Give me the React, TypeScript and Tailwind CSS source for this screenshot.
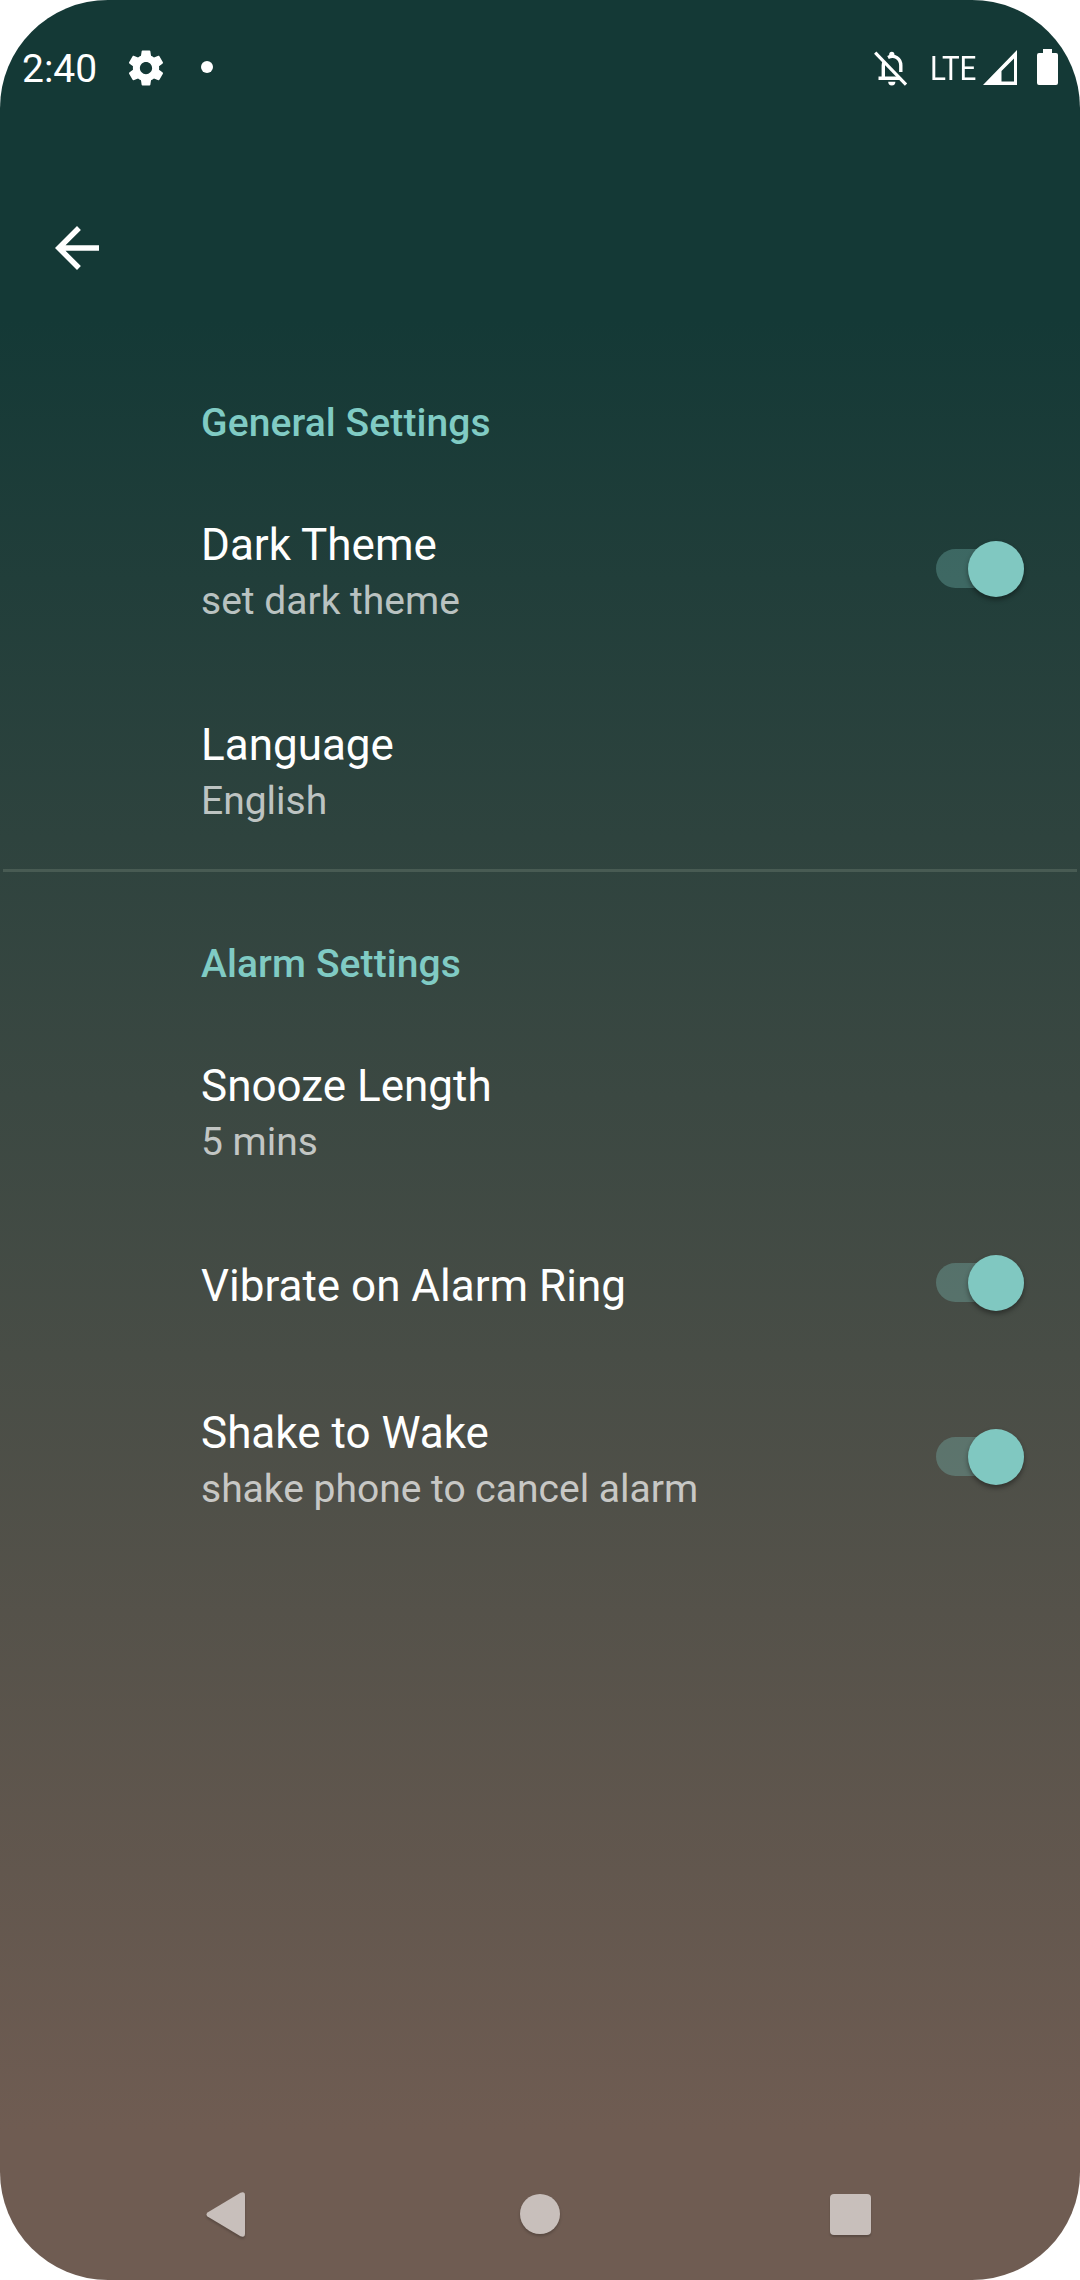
import React from "react";

function Switch() {
  return (
    <div className="relative mr-[56px] h-[56px] w-[88px] shrink-0">
      <div className="absolute left-0 top-[8px] h-[39px] w-[88px] rounded-full bg-[#80cbc4]/30" />
      <div className="absolute right-0 top-0 size-[56px] rounded-full bg-[#80c8c1] shadow-[0_3px_5px_rgba(0,0,0,0.38)]" />
    </div>
  );
}

function Category({ title }: { title: string }) {
  return (
    <h2 className="h-[138px] pt-[70px] pl-[201px] text-[39px] leading-[45px] font-medium tracking-[0.1px] text-[#80cbc4]">
      {title}
    </h2>
  );
}

type RowProps = { title: string; summary?: string; toggle?: boolean };

function Row({ title, summary, toggle }: RowProps) {
  return (
    <div
      className={`flex items-center justify-between pl-[201px] ${summary ? "h-[200px]" : "h-[147px] pb-px"}`}
    >
      <div className="flex h-full flex-col gap-[8px] pt-[50px]">
        <div className="text-[44px] leading-[52px] text-white">{title}</div>
        {summary && (
          <div className="text-[39px] leading-[45px] text-white/70">{summary}</div>
        )}
      </div>
      {toggle && <Switch />}
    </div>
  );
}

function StatusBar() {
  return (
    <header className="flex h-[136px] items-center justify-between pr-[22px] pl-[22px]">
      <div className="flex items-center text-white">
        <span className="w-[75px] pt-[3px] text-[39px] leading-[45px]">2:40</span>
        <svg className="mb-px ml-[28px] size-[42px]" viewBox="0 0 24 24" fill="currentColor">
          <path d="M19.43 12.98c.04-.32.07-.64.07-.98s-.03-.66-.07-.98l2.11-1.65c.19-.15.24-.42.12-.64l-2-3.46c-.12-.22-.39-.3-.61-.22l-2.49 1c-.52-.4-1.08-.73-1.69-.98l-.38-2.65C14.46 2.18 14.25 2 14 2h-4c-.25 0-.46.18-.49.42l-.38 2.65c-.61.25-1.17.59-1.69.98l-2.49-1c-.23-.09-.49 0-.61.22l-2 3.46c-.13.22-.07.49.12.64l2.11 1.65c-.04.32-.07.65-.07.98s.03.66.07.98l-2.11 1.65c-.19.15-.24.42-.12.64l2 3.46c.12.22.39.3.61.22l2.49-1c.52.4 1.08.73 1.69.98l.38 2.65c.03.24.24.42.49.42h4c.25 0 .46-.18.49-.42l.38-2.65c.61-.25 1.17-.59 1.69-.98l2.49 1c.23.09.49 0 .61-.22l2-3.46c.12-.22.07-.49-.12-.64l-2.11-1.65zM12 15.5c-1.93 0-3.5-1.57-3.5-3.5s1.57-3.5 3.5-3.5 3.5 1.57 3.5 3.5-1.57 3.5-3.5 3.5z" />
        </svg>
        <span className="mb-[2px] ml-[34px] size-[12px] rounded-full bg-white" />
      </div>
      <div className="flex items-center text-white">
        <svg className="h-[35px] w-[34px]" viewBox="0 0 34 35" fill="none" stroke="currentColor">
          <path d="M1.2 1.7L32 33.6" strokeWidth="3.2" />
          <path d="M4.5 27.2H26" strokeWidth="3.4" />
          <path d="M9.3 27V14.5c0-1.8.3-2.8.9-4.2" strokeWidth="3.4" />
          <path d="M14 6.5C20.5 3.2 26.8 7.6 26.8 14.5V21" strokeWidth="3.4" />
          <path d="M15.2 5.8V3.3a2.6 2.6 0 0 1 5.2 0v2.5z" fill="currentColor" stroke="none" />
          <path d="M14.2 30.8h7.2a3.6 3.6 0 0 1-7.2 0z" fill="currentColor" stroke="none" />
        </svg>
        <span className="mb-px ml-[22px] w-[47px] origin-left scale-x-[0.87] text-[34px] leading-[40px]">
          LTE
        </span>
        <svg className="mb-px ml-[6px] h-[35px] w-[34px]" viewBox="0 0 34 35" fill="currentColor">
          <path fillRule="evenodd" d="M34 0V35H0zM31 8.5L18.5 21V31.5H31z" />
        </svg>
        <svg className="mb-[2px] ml-[20px] h-[36px] w-[21px]" viewBox="0 0 21 36" fill="currentColor">
          <path d="M6 0h9v4h4a2 2 0 0 1 2 2v28a2 2 0 0 1-2 2H2a2 2 0 0 1-2-2V6a2 2 0 0 1 2-2h4z" />
        </svg>
      </div>
    </header>
  );
}

function NavBar() {
  return (
    <nav className="flex h-[132px] items-center justify-between pr-[209px] pl-[206px] text-[#c8bfbb]">
      <svg
        className="h-[45px] w-[40px] drop-shadow-[0_2px_1px_rgba(0,0,0,0.2)]"
        viewBox="0 0 40 45"
        fill="currentColor"
      >
        <path d="M1.5 20.5L34.5 .7Q39 -1 39 3.5V41.5Q39 46 34.5 44.3L1.5 24.5Q-.5 22.5 1.5 20.5z" />
      </svg>
      <div className="ml-[4px] size-[40px] rounded-full bg-[#c8bfbb] shadow-[0_2px_3px_rgba(0,0,0,0.22)]" />
      <div className="size-[41px] rounded-[4px] bg-[#c8bfbb] shadow-[0_2px_2px_rgba(0,0,0,0.2)]" />
    </nav>
  );
}

export default function App() {
  return (
    <div className="h-[2280px] w-[1080px] bg-white">
      <div className="flex h-full flex-col overflow-hidden rounded-[108px] bg-[linear-gradient(to_bottom,#143936_320px,#6f5c52_2130px)] font-['Roboto',sans-serif]">
        <StatusBar />
        <div className="flex h-[195px] items-start pt-[79px] pl-[44px]">
          <svg className="size-[66px] text-white" viewBox="0 0 24 24" fill="currentColor">
            <path d="M20 11H7.83l5.59-5.59L12 4l-8 8 8 8 1.41-1.41L7.83 13H20v-2z" />
          </svg>
        </div>
        <main className="flex-1">
          <Category title="General Settings" />
          <Row title="Dark Theme" summary="set dark theme" toggle />
          <Row title="Language" summary="English" />
          <hr className="mx-[3px] h-[3px] border-0 bg-[#485b53]" />
          <Category title="Alarm Settings" />
          <Row title="Snooze Length" summary="5 mins" />
          <Row title="Vibrate on Alarm Ring" toggle />
          <Row title="Shake to Wake" summary="shake phone to cancel alarm" toggle />
        </main>
        <NavBar />
      </div>
    </div>
  );
}
